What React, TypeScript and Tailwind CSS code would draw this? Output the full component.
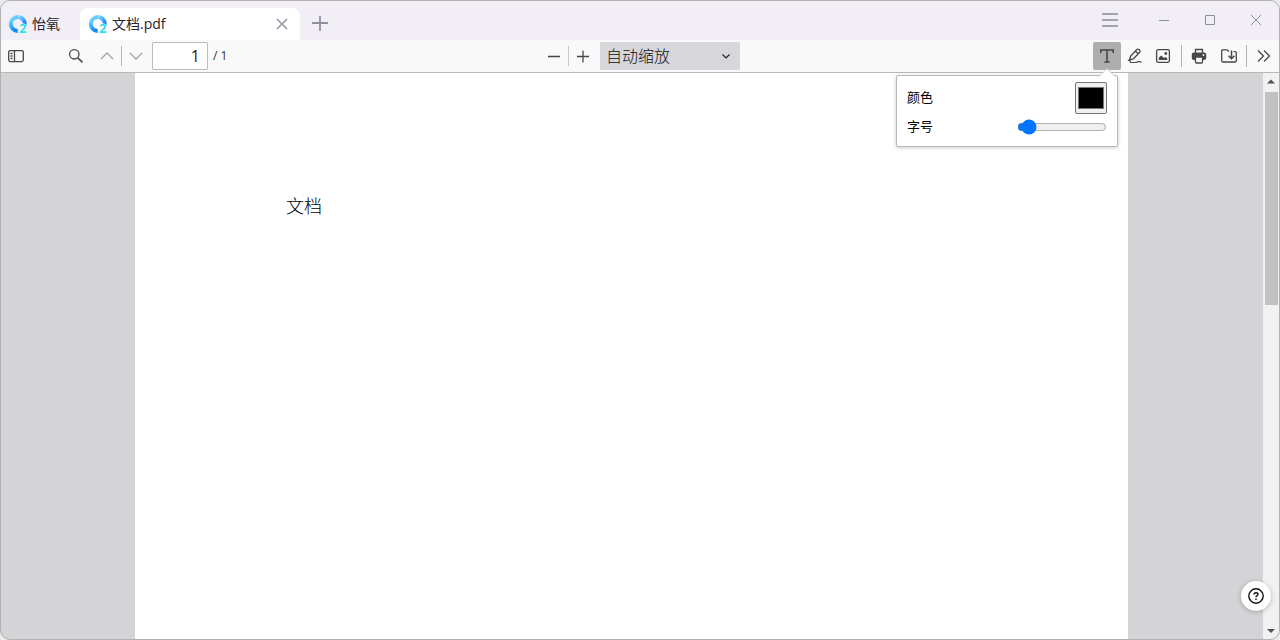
import React, { useState } from "react";

const Logo = () => (
    <svg viewBox="0 0 20 20" className="h-5 w-5 shrink-0 overflow-visible" aria-hidden="true">
        <defs>
            <linearGradient id="ring" x1="0" y1="0" x2="0.5" y2="1">
                <stop offset="0" stopColor="#a4e6ff" />
                <stop offset="0.45" stopColor="#45b9fd" />
                <stop offset="1" stopColor="#1388fb" />
            </linearGradient>
            <linearGradient id="ringEnd" x1="0" y1="0" x2="0.8" y2="1">
                <stop offset="0" stopColor="#8cdcff" />
                <stop offset="1" stopColor="#1680fd" />
            </linearGradient>
        </defs>
        <path d="M9.700 2.900 A7 7 0 0 0 9.700 16.900" fill="none" stroke="url(#ring)" strokeWidth="4" />
        <path d="M9.500 2.900 A7 7 0 0 1 16.500 11.500" fill="none" stroke="url(#ringEnd)" strokeWidth="4" />
        <text x="11" y="19" fontFamily="Open Sans, sans-serif" fontWeight="700" fontSize="13" fill="#2fe0e6" stroke="#f4fbff" strokeWidth="1.2" paintOrder="stroke">2</text>
    </svg>
);

const Icon = ({ children, size = "h-4 w-4" }: any) => (
    <svg viewBox="0 0 16 16" className={size} fill="none" stroke="currentColor" strokeWidth="1.3" aria-hidden="true">
        {children}
    </svg>
);

const ToolButton = ({ label, active, muted, children, ...rest }: any) => (
    <button
        type="button"
        aria-label={label}
        title={label}
        className={`flex h-7 w-7 shrink-0 items-center justify-center ${active ? "rounded-xs bg-[#aeaeaf]" : ""} ${muted ? "text-[#a3a3a4]" : "text-[#474747]"}`}
        {...rest}
    >
        {children}
    </button>
);

const WindowButton = ({ label, children }: any) => (
    <button type="button" aria-label={label} className="flex h-[38px] w-[46px] items-center justify-center text-[#8d8f9f]">
        <svg viewBox="0 0 12 12" className="h-3 w-3" fill="none" stroke="currentColor" strokeWidth="1" aria-hidden="true">
            {children}
        </svg>
    </button>
);

const TitleBar = () => (
    <header className="flex h-[39px] shrink-0 items-end justify-between bg-[#f1eff5]">
        <div className="flex h-8 items-center">
            <a href="#home" className="flex w-[79px] items-center gap-1 pl-[7px] text-sm text-[#1f2430]">
                <Logo />
                怡氧
            </a>
            <div className="flex h-8 w-[220px] items-center rounded-t-lg bg-white pr-3 pl-2">
                <Logo />
                <span className="ml-1 flex-1 text-sm text-[#1f2430]">文档.pdf</span>
                <button type="button" aria-label="关闭标签页" className="text-[#8d8f9f]">
                    <svg viewBox="0 0 12 12" className="h-3 w-3" fill="none" stroke="currentColor" strokeWidth="1.4">
                        <path d="M1 1 L11 11 M11 1 L1 11" />
                    </svg>
                </button>
            </div>
            <button type="button" aria-label="新建标签页" className="ml-3 text-[#8d8f9f]">
                <svg viewBox="0 0 16 16" className="h-4 w-4" fill="none" stroke="currentColor" strokeWidth="1.8">
                    <path d="M8 0 V15 M0 7 H16" />
                </svg>
            </button>
        </div>
        <div className="flex self-start">
            <button type="button" aria-label="菜单" className="mr-[22px] text-[#a2a3af]">
                <svg viewBox="0 0 18 16" className="h-4 w-[18px]" fill="none" stroke="currentColor" strokeWidth="2">
                    <path d="M1 2 H17 M1 8 H17 M1 14 H17" />
                </svg>
            </button>
            <WindowButton label="最小化">
                <path d="M1 6.5 H11" />
            </WindowButton>
            <WindowButton label="最大化">
                <path d="M1.5 1.5 H10.5 V10.5 H1.5 Z" />
            </WindowButton>
            <WindowButton label="关闭">
                <path d="M1 1 L11 11 M11 1 L1 11" />
            </WindowButton>
        </div>
    </header>
);

// 文本工具的设置面板
const TextPanel = () => {
    const [color, setColor] = useState("#000000");
    const [size, setSize] = useState(10);

    return (
        <div className="absolute top-[33px] right-[3px] z-10 w-[222px] rounded-xs border border-[#b8b8b8] bg-white px-[10px] pt-[6px] pb-[6px] text-[13px] text-black shadow-[0_1px_4px_rgba(12,12,13,0.2)]">
            <svg viewBox="0 0 18 9" className="absolute -top-2 right-[1px] h-[9px] w-[18px]" aria-hidden="true">
                <path d="M1 9 L9 1 L17 9 Z" fill="#fff" />
                <path d="M0 8 H1.5 L9 0.5 L16.500 8 H18" fill="none" stroke="#d0d0d0" strokeWidth="1" />
            </svg>
            <div className="flex h-8 items-center justify-between">
                <label htmlFor="color">颜色</label>
                <input
                    id="color"
                    type="color"
                    value={color}
                    className="h-8 w-8 rounded-xs border border-[#767676] bg-[#efefef]"
                    onChange={(e) => setColor(e.target.value)}
                />
            </div>
            <div className="flex h-[26px] items-center justify-between">
                <label htmlFor="size">字号</label>
                <input
                    id="size"
                    type="range"
                    min="5"
                    max="100"
                    value={size}
                    className="h-4 w-[90px]"
                    onChange={(e) => setSize(Number(e.target.value))}
                />
            </div>
        </div>
    );
};

const Toolbar = () => {
    const [page, setPage] = useState("1");
    const [open, setOpen] = useState(true);

    return (
        <div className="grid h-[33px] shrink-0 grid-cols-[1fr_auto_1fr] items-center border-b border-[#b8b8b8] bg-[#f9f9fa]">
            <div className="flex items-center pl-px">
                <ToolButton label="切换侧栏">
                    <Icon>
                        <rect x="0.7" y="2.6" width="14.600" height="11" rx="1.5" />
                        <path d="M6.500 2.6 V13.600 M2.500 5.500 H4.500 M2.500 8 H4.500 M2.500 10.500 H4.500" />
                    </Icon>
                </ToolButton>
                <div className="ml-8">
                    <ToolButton label="查找">
                        <Icon>
                            <circle cx="6.300" cy="6.300" r="4.700" />
                            <path d="M9.800 9.800 L14.500 14.300" strokeWidth="1.600" />
                        </Icon>
                    </ToolButton>
                </div>
                <div className="ml-[3px] flex items-center">
                    <ToolButton label="上一页" muted>
                        <Icon><path d="M2 11 L8 5 L14 11" /></Icon>
                    </ToolButton>
                    <span className="h-5 w-px bg-[#b8b8b8]" />
                    <ToolButton label="下一页" muted>
                        <Icon><path d="M2 5 L8 11 L14 5" /></Icon>
                    </ToolButton>
                </div>
                <input
                    type="text"
                    aria-label="页码"
                    value={page}
                    className="ml-[2px] h-7 w-14 rounded-xs border border-[#bbbbbc] bg-white px-[7px] text-right text-base text-[#222]"
                    onChange={(e) => setPage(e.target.value)}
                />
                <span className="ml-[5px] text-xs text-[#333]">/ 1</span>
            </div>

            <div className="flex items-center">
                <ToolButton label="缩小">
                    <Icon><path d="M2 8.500 H14" /></Icon>
                </ToolButton>
                <span className="h-5 w-px bg-[#c8c8c8]" />
                <ToolButton label="放大">
                    <Icon><path d="M2 8.500 H14 M8 2.500 V14.500" /></Icon>
                </ToolButton>
                <div className="relative ml-[3px]">
                    <select aria-label="缩放" className="h-7 w-[140px] appearance-none bg-[#d7d7db] pl-[6px] text-base font-light text-[#111]">
                        <option>自动缩放</option>
                        <option>实际大小</option>
                        <option>适合页面</option>
                        <option>适合页宽</option>
                    </select>
                    <svg viewBox="0 0 10 10" className="pointer-events-none absolute top-[9px] right-[9px] h-[10px] w-[10px]" fill="none" stroke="#222" strokeWidth="1.200" aria-hidden="true">
                        <path d="M1.500 3.500 L5 7 L8.500 3.500" />
                    </svg>
                </div>
            </div>

            <div className="flex items-center justify-end pr-px">
                <div className="relative">
                    <ToolButton label="文本" active={open} aria-expanded={open} onClick={() => setOpen(!open)}>
                        <Icon>
                            <path d="M1.800 5 V2 H14.200 V5 M8 2 V14" strokeWidth="1.600" />
                            <path d="M5.300 14 H10.700" strokeWidth="1.400" />
                        </Icon>
                    </ToolButton>
                    {open && <TextPanel />}
                </div>
                <ToolButton label="绘图">
                    <Icon>
                        <path d="M2.600 12 L3.500 8.300 L9.800 1.500 Q10.800 0.600 12 1.600 Q13.700 3 12.700 4.200 L6.300 11 Z M8.500 3.200 L11.300 5.700" />
                        <path d="M0.800 12.500 Q2.500 11.600 3 12.500 Q2.500 14.600 5 14.500 H9 Q12 12.800 14.500 14.300" strokeWidth="1.200" />
                    </Icon>
                </ToolButton>
                <ToolButton label="图像">
                    <Icon>
                        <rect x="1.600" y="1.600" width="12.800" height="12.800" rx="1.800" />
                        <path d="M3.800 12 V9.800 L6.200 7.500 L9 10 L10.500 9 L12.300 10.500 V12 Z" fill="currentColor" stroke="none" />
                        <circle cx="10.800" cy="5.500" r="1.400" fill="currentColor" stroke="none" />
                    </Icon>
                </ToolButton>
                <span className="mr-[3px] ml-1 h-[22px] w-px bg-[#b0b0b0]" />
                <ToolButton label="打印">
                    <Icon>
                        <path d="M4.500 5 V1.500 H11.500 V5" />
                        <rect x="0.800" y="4.500" width="14.400" height="7.500" rx="2" fill="currentColor" stroke="none" />
                        <path d="M4.500 9 H11.500 V14 Q11.500 15 10.500 15 H5.500 Q4.500 15 4.500 14 Z" fill="#f9f9fa" />
                        <circle cx="12.500" cy="7" r="0.900" fill="#f9f9fa" stroke="none" />
                    </Icon>
                </ToolButton>
                <div className="ml-[2px]">
                    <ToolButton label="保存">
                        <Icon>
                            <path d="M8 3.500 L6 1.800 H2 Q0.700 1.800 0.700 3 V12.800 Q0.700 14 2 14 H14 Q15.300 14 15.300 12.800 V4.800 Q15.300 3.600 14 3.600 H12.500" />
                            <path d="M10.500 2.500 V10.500 M7.500 7.700 L10.500 10.700 L13.500 7.700" strokeWidth="1.500" />
                        </Icon>
                    </ToolButton>
                </div>
                <span className="mx-[3px] h-[22px] w-px bg-[#b0b0b0]" />
                <ToolButton label="更多工具">
                    <Icon><path d="M2 2.500 L7.500 8 L2 13.500 M8 2.500 L13.500 8 L8 13.500" /></Icon>
                </ToolButton>
            </div>
        </div>
    );
};

const ScrollBar = () => (
    <div className="flex w-4 shrink-0 flex-col items-center justify-between bg-[#f1f1f1]" aria-hidden="true">
        <div className="flex h-full w-full flex-col items-center">
            <svg viewBox="0 0 16 19" className="h-[19px] w-4"><path d="M4 10.500 L8 6.500 L12 10.500 Z" fill="#505050" /></svg>
            <div className="h-[213px] w-[13px] bg-[#c1c1c1]" />
        </div>
        <svg viewBox="0 0 16 17" className="h-[17px] w-4 shrink-0"><path d="M4 7 L8 11 L12 7 Z" fill="#505050" /></svg>
    </div>
);

export default function App() {
    return (
        <div className="h-screen bg-[#ececec] font-['Open_Sans','Noto_Sans_CJK_SC',sans-serif]">
            <div className="relative flex h-full flex-col overflow-hidden rounded-[10px] border border-[#b2b0b3] bg-[#d4d4d6]">
                <TitleBar />
                <Toolbar />
                <main className="flex min-h-0 flex-1">
                    <div className="flex flex-1 pr-[135px] pl-[134px]">
                        <article className="flex-1 bg-white px-[151px] pt-[118px] font-['Noto_Sans_CJK_SC',sans-serif] text-lg font-light text-black">
                            <p>文档</p>
                        </article>
                    </div>
                    <ScrollBar />
                </main>
                <button
                    type="button"
                    aria-label="帮助"
                    className="absolute right-2 bottom-7 flex h-[30px] w-[30px] items-center justify-center rounded-full bg-white shadow-[0_1px_5px_rgba(0,0,0,0.25)]"
                >
                    <svg viewBox="0 0 16 16" className="h-4 w-4" fill="none" stroke="#111" strokeWidth="1.400" aria-hidden="true">
                        <circle cx="8" cy="8" r="7.200" />
                        <path d="M6 6.500 Q6 4.700 8 4.700 Q10 4.700 10 6.300 Q10 7.300 8.800 7.900 Q8 8.300 8 9.300" />
                        <path d="M8 10.500 V12" />
                    </svg>
                </button>
            </div>
        </div>
    );
}
